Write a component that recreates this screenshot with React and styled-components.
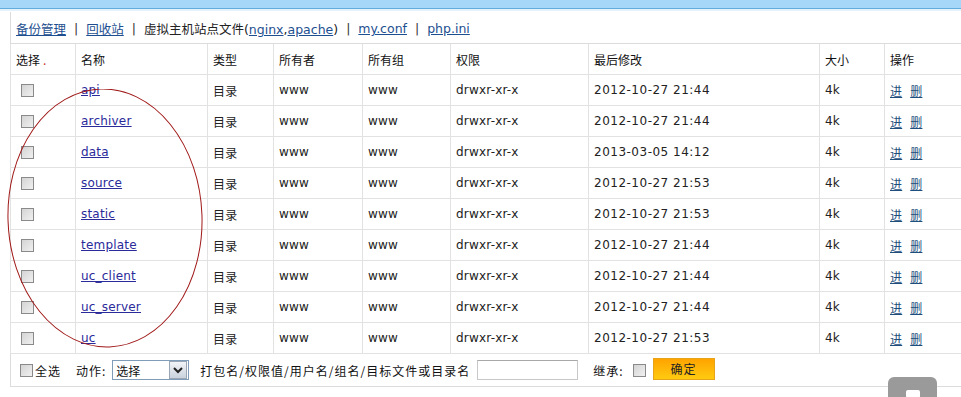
import React from "react";
import styled, { createGlobalStyle } from "styled-components";

const GlobalStyle = createGlobalStyle`
  html, body {
    margin: 0;
    padding: 0;
    background: #fff;
    overflow: hidden;
  }
  body {
    font-family: "DejaVu Sans", Verdana, "Noto Sans CJK SC", sans-serif;
    font-size: 12px;
    color: #222;
  }
`;

const rows = [
  { name: "api", time: "2012-10-27 21:44" },
  { name: "archiver", time: "2012-10-27 21:44" },
  { name: "data", time: "2013-03-05 14:12" },
  { name: "source", time: "2012-10-27 21:53" },
  { name: "static", time: "2012-10-27 21:53" },
  { name: "template", time: "2012-10-27 21:44" },
  { name: "uc_client", time: "2012-10-27 21:44" },
  { name: "uc_server", time: "2012-10-27 21:44" },
  { name: "uc", time: "2012-10-27 21:53" },
];

const cols = [65, 132, 66, 89, 88, 138, 231, 65, 90];

const App = () => {
  return (
    <Page>
      <GlobalStyle />
      <TopBar />
      <Panel>
        <NavLinks>
          <NavLink>备份管理</NavLink>
          <Sep>|</Sep>
          <NavLink>回收站</NavLink>
          <Sep>|</Sep>
          <span>
            虚拟主机站点文件(<NavLink>nginx</NavLink>,<NavLink>apache</NavLink>)
          </span>
          <Sep>|</Sep>
          <NavLink>my.conf</NavLink>
          <Sep>|</Sep>
          <NavLink>php.ini</NavLink>
        </NavLinks>
        <Table>
          <colgroup>
            {cols.map((w, i) => (
              <col key={i} style={{ width: w }} />
            ))}
          </colgroup>
          <thead>
            <tr>
              <Th>
                选择<Dot>.</Dot>
              </Th>
              <Th>名称</Th>
              <Th>类型</Th>
              <Th>所有者</Th>
              <Th>所有组</Th>
              <Th>权限</Th>
              <Th>最后修改</Th>
              <Th>大小</Th>
              <Th>操作</Th>
            </tr>
          </thead>
          <tbody>
            {rows.map((r) => (
              <tr key={r.name}>
                <Td>
                  <Check />
                </Td>
                <Td>
                  <NameLink>{r.name}</NameLink>
                </Td>
                <Td $cjk>目录</Td>
                <Td>www</Td>
                <Td>www</Td>
                <Td>drwxr-xr-x</Td>
                <Td $wide>{r.time}</Td>
                <Td>4k</Td>
                <Td>
                  <OpLink>进</OpLink>
                  <OpLink $next>删</OpLink>
                </Td>
              </tr>
            ))}
          </tbody>
        </Table>
        <Footer>
          <Label>
            <Check $left={9} />
            全选
          </Label>
          <Label $gap={15}>
            动作:
            <FakeSelect>
              <span>选择</span>
              <SelectArrow>
                <svg width="10" height="8" viewBox="0 0 10 8">
                  <path d="M1 2 L5 6 L9 2" fill="none" stroke="#222" strokeWidth="2" />
                </svg>
              </SelectArrow>
            </FakeSelect>
          </Label>
          <Label $gap={11}>打包名/权限值/用户名/组名/目标文件或目录名</Label>
          <TextInput />
          <Label $gap={15}>
            继承:
            <Check $left={7} />
          </Label>
          <OkButton>确定</OkButton>
        </Footer>
        <Ellipse width="220" height="280" viewBox="0 0 220 280">
          <ellipse
            cx="103"
            cy="129"
            rx="97"
            ry="129"
            fill="none"
            stroke="#a01818"
            strokeWidth="1"
            transform="rotate(-2 103 129)"
          />
        </Ellipse>
      </Panel>
      <FloatButton>
        <FloatIcon />
      </FloatButton>
    </Page>
  );
};

export default App;

const Page = styled.div`
  position: relative;
  width: 961px;
  height: 397px;
  overflow: hidden;
`;

const TopBar = styled.div`
  height: 8px;
  background: #a6d6f8;
  border-bottom: 1px solid #62acdc;
  box-shadow: 0 2px 0 #e4f3fb;
`;

const Panel = styled.div`
  position: relative;
  margin: 3px 0 0 10px;
  border-left: 1px solid #dcdcdc;
  border-bottom: 1px solid #dcdcdc;
  width: 980px;
`;

const NavLinks = styled.div`
  height: 29px;
  display: flex;
  align-items: center;
  padding: 2px 0 0 5px;
  font-family: "DejaVu Sans", "Noto Sans CJK SC", sans-serif;
  font-size: 12.5px;
  color: #222;
  border-bottom: 1px solid #dcdcdc;
`;

const NavLink = styled.a`
  color: #1d4f90;
  text-decoration: underline;
  cursor: pointer;
`;

const Sep = styled.span`
  margin: 0 8px;
  color: #333;
`;

const Table = styled.table`
  border-collapse: collapse;
  table-layout: fixed;
  width: ${cols.reduce((a, b) => a + b, 0)}px;
  margin-left: -1px;
`;

const cell = `
  border: 1px solid #e2e2e2;
  height: 30px;
  padding: 0 0 0 5px;
  text-align: left;
  white-space: nowrap;
  overflow: hidden;
`;

const Th = styled.th`
  ${cell}
  font-weight: normal;
  font-family: "Noto Sans CJK SC", sans-serif;
  font-size: 12px;
  color: #111;
  border-top: none;
`;

const Td = styled.td`
  ${cell}
  font-size: 12px;
  color: #222;
  letter-spacing: ${(p) => (p.$wide ? "0.5px" : "0.2px")};
  font-family: ${(p) =>
    p.$cjk ? `"Noto Sans CJK SC", sans-serif` : `"DejaVu Sans", Verdana, sans-serif`};
`;

const Dot = styled.span`
  color: #c33;
  margin-left: 3px;
`;

const Check = styled.span`
  display: inline-block;
  width: 11px;
  height: 11px;
  margin-left: ${(p) => (p.$left !== undefined ? p.$left : 5)}px;
  border: 1px solid #8a8a8a;
  background: linear-gradient(135deg, #d4d4d4, #f0f0f0);
  vertical-align: middle;
`;

const NameLink = styled.a`
  color: #2a2a9a;
  text-decoration: underline;
`;

const OpLink = styled.a`
  font-family: "Noto Sans CJK SC", sans-serif;
  color: #1e4f7c;
  text-decoration: underline;
  margin-left: ${(p) => (p.$next ? "8px" : "0")};
`;

const Footer = styled.div`
  height: 32px;
  display: flex;
  align-items: center;
  font-family: "Noto Sans CJK SC", sans-serif;
  font-size: 12px;
  letter-spacing: 1px;
  color: #111;
`;

const Label = styled.span`
  display: flex;
  align-items: center;
  gap: 2px;
  margin-left: ${(p) => p.$gap || 0}px;
  white-space: nowrap;
`;

const FakeSelect = styled.span`
  display: flex;
  align-items: center;
  justify-content: space-between;
  width: 72px;
  height: 18px;
  margin-left: 4px;
  border: 1px solid #7f9db9;
  padding-left: 3px;
  background: #fff;
  font-size: 12px;
  letter-spacing: 0;
`;

const SelectArrow = styled.span`
  width: 16px;
  height: 16px;
  margin-right: 1px;
  display: flex;
  align-items: center;
  justify-content: center;
  border: 1px solid #9aa6b4;
  background: linear-gradient(#f2f4f7, #c9d2dd);
`;

const TextInput = styled.span`
  display: inline-block;
  width: 99px;
  height: 18px;
  margin-left: 7px;
  border: 1px solid #c8c8c8;
  border-top-color: #a8a8a8;
`;

const OkButton = styled.span`
  display: flex;
  align-items: center;
  justify-content: center;
  width: 60px;
  height: 20px;
  margin: -3px 0 0 7px;
  border: 1px solid #e8a418;
  background: linear-gradient(#ffa300, #ffcb10);
  color: #222;
  font-size: 12px;
`;

const Ellipse = styled.svg`
  position: absolute;
  left: -9px;
  top: 77px;
  pointer-events: none;
`;

const FloatButton = styled.div`
  position: absolute;
  left: 888px;
  top: 377px;
  width: 49px;
  height: 30px;
  border-radius: 6px;
  background: #9a9a9a;
  display: flex;
  justify-content: center;
`;

const FloatIcon = styled.span`
  margin-top: 13px;
  width: 14px;
  height: 8px;
  background: #fff;
  border-radius: 2px;
`;
